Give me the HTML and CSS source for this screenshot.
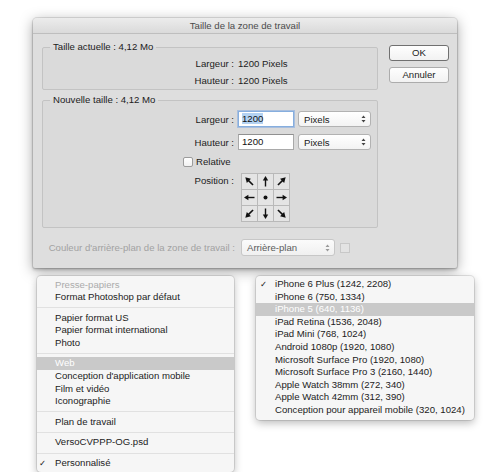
FILE: index.html
```html
<!DOCTYPE html>
<html lang="fr">
<head>
<meta charset="utf-8">
<title>Taille de la zone de travail</title>
<link rel="stylesheet" href="styles.css">
</head>
<body>
<div class="stage">
  <div class="dialog">
    <div class="titlebar">Taille de la zone de travail</div>
    <div class="dialog-body">
      <div class="main">
        <fieldset class="group group-current">
          <legend>Taille actuelle : 4,12 Mo</legend>
          <div class="info-grid">
            <span class="lbl">Largeur :</span><span>1200 Pixels</span>
            <span class="lbl">Hauteur :</span><span>1200 Pixels</span>
          </div>
        </fieldset>
        <fieldset class="group group-new">
          <legend>Nouvelle taille : 4,12 Mo</legend>
          <div class="row">
            <span class="lbl">Largeur :</span>
            <div class="field focused"><span class="sel-text">1200</span></div>
            <div class="select"><span>Pixels</span><svg class="updown" width="5" height="8" viewBox="0 0 5 8"><path d="M2.5 0.5 L4.5 3 L0.5 3 Z M0.5 5 L4.5 5 L2.5 7.5 Z" fill="#444"/></svg></div>
          </div>
          <div class="row row-h">
            <span class="lbl">Hauteur :</span>
            <div class="field"><span>1200</span></div>
            <div class="select"><span>Pixels</span><svg class="updown" width="5" height="8" viewBox="0 0 5 8"><path d="M2.5 0.5 L4.5 3 L0.5 3 Z M0.5 5 L4.5 5 L2.5 7.5 Z" fill="#444"/></svg></div>
          </div>
          <div class="row row-rel">
            <label class="rel"><span class="checkbox"></span><span>Relative</span></label>
          </div>
          <div class="row row-pos">
            <span class="lbl pos-lbl">Position :</span>
            <div class="anchor">
              <div class="cell"><svg viewBox="0 0 15 15" width="15" height="15"><g transform="rotate(-135 7.5 7.5)"><line x1="2.5" y1="7.5" x2="9.5" y2="7.5" stroke="#111" stroke-width="1.6"/><path d="M13.4 7.5 L8.4 4.6 L8.4 10.4 Z" fill="#111"/></g></svg></div>
              <div class="cell"><svg viewBox="0 0 15 15" width="15" height="15"><g transform="rotate(-90 7.5 7.5)"><line x1="2.5" y1="7.5" x2="9.5" y2="7.5" stroke="#111" stroke-width="1.4"/><path d="M13 7.5 L8.6 4.8 L8.6 10.2 Z" fill="#111"/></g></svg></div>
              <div class="cell"><svg viewBox="0 0 15 15" width="15" height="15"><g transform="rotate(-45 7.5 7.5)"><line x1="2.5" y1="7.5" x2="9.5" y2="7.5" stroke="#111" stroke-width="1.6"/><path d="M13.4 7.5 L8.4 4.6 L8.4 10.4 Z" fill="#111"/></g></svg></div>
              <div class="cell"><svg viewBox="0 0 15 15" width="15" height="15"><g transform="rotate(180 7.5 7.5)"><line x1="2.5" y1="7.5" x2="9.5" y2="7.5" stroke="#111" stroke-width="1.4"/><path d="M13 7.5 L8.6 4.8 L8.6 10.2 Z" fill="#111"/></g></svg></div>
              <div class="cell"><svg viewBox="0 0 15 15" width="15" height="15"><circle cx="7.5" cy="7.5" r="2" fill="#111"/></svg></div>
              <div class="cell"><svg viewBox="0 0 15 15" width="15" height="15"><line x1="2.5" y1="7.5" x2="9.5" y2="7.5" stroke="#111" stroke-width="1.4"/><path d="M13 7.5 L8.6 4.8 L8.6 10.2 Z" fill="#111"/></svg></div>
              <div class="cell"><svg viewBox="0 0 15 15" width="15" height="15"><g transform="rotate(135 7.5 7.5)"><line x1="2.5" y1="7.5" x2="9.5" y2="7.5" stroke="#111" stroke-width="1.6"/><path d="M13.4 7.5 L8.4 4.6 L8.4 10.4 Z" fill="#111"/></g></svg></div>
              <div class="cell"><svg viewBox="0 0 15 15" width="15" height="15"><g transform="rotate(90 7.5 7.5)"><line x1="2.5" y1="7.5" x2="9.5" y2="7.5" stroke="#111" stroke-width="1.4"/><path d="M13 7.5 L8.6 4.8 L8.6 10.2 Z" fill="#111"/></g></svg></div>
              <div class="cell"><svg viewBox="0 0 15 15" width="15" height="15"><g transform="rotate(45 7.5 7.5)"><line x1="2.5" y1="7.5" x2="9.5" y2="7.5" stroke="#111" stroke-width="1.6"/><path d="M13.4 7.5 L8.4 4.6 L8.4 10.4 Z" fill="#111"/></g></svg></div>
            </div>
          </div>
        </fieldset>
        <div class="bg-row">
          <span class="bg-lbl">Couleur d'arrière-plan de la zone de travail :</span>
          <div class="select select-bg"><span>Arrière-plan</span><svg class="updown" width="5" height="8" viewBox="0 0 5 8"><path d="M2.5 0.5 L4.5 3 L0.5 3 Z M0.5 5 L4.5 5 L2.5 7.5 Z" fill="#9a9a9a"/></svg></div>
          <span class="swatch"></span>
        </div>
      </div>
      <div class="buttons">
        <button class="btn btn-default">OK</button>
        <button class="btn">Annuler</button>
      </div>
    </div>
  </div>

  <div class="menus">
    <ul class="menu menu-left">
      <li class="item disabled">Presse-papiers</li>
      <li class="item">Format Photoshop par défaut</li>
      <li class="sep"></li>
      <li class="item">Papier format US</li>
      <li class="item">Papier format international</li>
      <li class="item">Photo</li>
      <li class="sep"></li>
      <li class="item hl">Web</li>
      <li class="item">Conception d'application mobile</li>
      <li class="item">Film et vidéo</li>
      <li class="item">Iconographie</li>
      <li class="sep"></li>
      <li class="item">Plan de travail</li>
      <li class="sep"></li>
      <li class="item">VersoCVPPP-OG.psd</li>
      <li class="sep"></li>
      <li class="item checked">Personnalisé</li>
    </ul>
    <ul class="menu menu-right">
      <li class="item checked">iPhone 6 Plus (1242, 2208)</li>
      <li class="item">iPhone 6 (750, 1334)</li>
      <li class="item hl">iPhone 5 (640, 1136)</li>
      <li class="item">iPad Retina (1536, 2048)</li>
      <li class="item">iPad Mini (768, 1024)</li>
      <li class="item">Android 1080p (1920, 1080)</li>
      <li class="item">Microsoft Surface Pro (1920, 1080)</li>
      <li class="item">Microsoft Surface Pro 3 (2160, 1440)</li>
      <li class="item">Apple Watch 38mm (272, 340)</li>
      <li class="item">Apple Watch 42mm (312, 390)</li>
      <li class="item">Conception pour appareil mobile (320, 1024)</li>
    </ul>
  </div>
</div>
</body>
</html>
```

FILE: styles.css
```css
* { box-sizing: border-box; }

body {
  margin: 0;
  background: #ffffff;
  font-family: "Liberation Sans", Arial, sans-serif;
  font-size: 9.6px;
  color: #1c1c1c;
}

.stage {
  padding: 18px 0 0 33px;
}

/* ---------- dialog ---------- */
.dialog {
  width: 424px;
  background: #dedede;
  border-radius: 4px 4px 2px 2px;
  box-shadow: 0 0 0 1px rgba(0, 0, 0, 0.10), 0 2px 3px rgba(0, 0, 0, 0.18), 0 3px 14px rgba(0, 0, 0, 0.35);
}

.titlebar {
  height: 16px;
  line-height: 15px;
  text-align: center;
  color: #4b4b4b;
  background: linear-gradient(#ececec, #dadada);
  border-bottom: 1px solid #bebebe;
  border-radius: 4px 4px 0 0;
}

.dialog-body {
  display: flex;
  padding: 7px 8px 12px 9px;
}

.main {
  width: 336px;
}

.group {
  margin: 0;
  border: 1px solid #c3c3c3;
  border-radius: 2px;
  background: #dadada;
  min-inline-size: 0;
}

.group legend {
  margin-left: 7px;
  padding: 0 3px;
  line-height: 12px;
  color: #1c1c1c;
}

.group-current {
  padding: 4px 0 2px;
}

.info-grid {
  display: grid;
  grid-template-columns: 191px auto;
  column-gap: 4px;
  row-gap: 4px;
  line-height: 13px;
}

.lbl {
  text-align: right;
}

.group-new {
  margin-top: 4px;
  padding: 5px 0 5px;
}

.row {
  display: grid;
  grid-template-columns: 191px 56px 73px;
  column-gap: 4px;
  align-items: center;
  height: 16px;
}

.row-h { margin-top: 7px; }

.row-rel {
  margin-top: 6px;
  height: 12px;
}

.row-pos {
  margin-top: 5px;
  height: 49px;
  align-items: start;
}

.pos-lbl {
  line-height: 16px;
}

.field {
  height: 16px;
  border: 1px solid #a9a9a9;
  border-top-color: #909090;
  background: #ffffff;
  padding-left: 3px;
  line-height: 14px;
  color: #111;
}

.field.focused {
  border-color: #86aede;
  box-shadow: 0 0 0 1px rgba(130, 170, 225, 0.55);
}

.sel-text {
  background: #b3d2f2;
}

.select {
  height: 16px;
  border: 1px solid #b2b2b2;
  border-radius: 3px;
  background: linear-gradient(#ffffff, #f3f3f3);
  display: flex;
  align-items: center;
  justify-content: space-between;
  padding: 0 4px 0 5px;
  color: #1a1a1a;
}

.updown { display: block; }

.rel {
  grid-column: 1 / 3;
  display: flex;
  align-items: center;
  gap: 3px;
  padding-left: 140px;
  line-height: 12px;
}

.checkbox {
  width: 10px;
  height: 10px;
  border: 1px solid #9c9c9c;
  border-radius: 2px;
  background: linear-gradient(#ffffff, #f1f1f1);
}

.anchor {
  margin-left: 3px;
  width: 49px;
  height: 49px;
  display: grid;
  grid-template-columns: repeat(3, 15px);
  grid-template-rows: repeat(3, 15px);
  gap: 1px;
  padding: 1px;
  background: #b9b9b9;
}

.cell {
  background: #e4e4e4;
}

.cell svg { display: block; }

.bg-row {
  margin-top: 11px;
  height: 17px;
  display: flex;
  align-items: center;
}

.bg-lbl {
  width: 193px;
  text-align: right;
  color: #a2a2a2;
  margin-right: 6px;
  white-space: nowrap;
}

.select-bg {
  width: 94px;
  height: 17px;
  border-color: #c7c7c7;
  color: #5b5b5b;
  background: linear-gradient(#fbfbfb, #f0f0f0);
}

.swatch {
  width: 10px;
  height: 10px;
  margin-left: 5px;
  border: 1px solid #c8c8c8;
  background: #e3e3e3;
}

.buttons {
  margin-left: 11px;
  margin-top: 4px;
  display: flex;
  flex-direction: column;
  gap: 6px;
}

.btn {
  width: 60px;
  height: 16px;
  padding: 0;
  font: inherit;
  color: #1c1c1c;
  line-height: 14px;
  background: linear-gradient(#fefefe, #f2f2f2);
  border: 1px solid #acacac;
  border-radius: 3px;
}

.btn-default {
  border-color: #707070;
}

/* ---------- popup menus ---------- */
.menus {
  display: flex;
  align-items: flex-start;
  gap: 22px;
  margin-top: 8px;
  padding-left: 4px;
}

.menu {
  list-style: none;
  margin: 0;
  background: #f6f6f6;
  border-radius: 4px;
  box-shadow: 0 0 0 1px rgba(0, 0, 0, 0.10), 0 3px 9px rgba(0, 0, 0, 0.28);
}

.menu-left {
  width: 197px;
  padding: 2.5px 0 2px;
}

.menu-right {
  width: 218px;
  padding: 2px 0 3px;
}

.item {
  line-height: 12.6px;
  white-space: nowrap;
  color: #1c1c1c;
}

.item::before {
  content: "";
  display: inline-block;
  width: 16px;
  padding-left: 2px;
  font-family: "DejaVu Sans", sans-serif;
  font-size: 8.5px;
}

.menu-right .item::before {
  width: 15px;
  padding-left: 4px;
}

.item.checked::before {
  content: "\2713";
}

.item.disabled { color: #ababab; }

.item.hl {
  background: #c9c9c9;
  color: #ffffff;
}

.sep {
  height: 1px;
  margin: 3.5px 0;
  background: #e1e1e1;
}
```
